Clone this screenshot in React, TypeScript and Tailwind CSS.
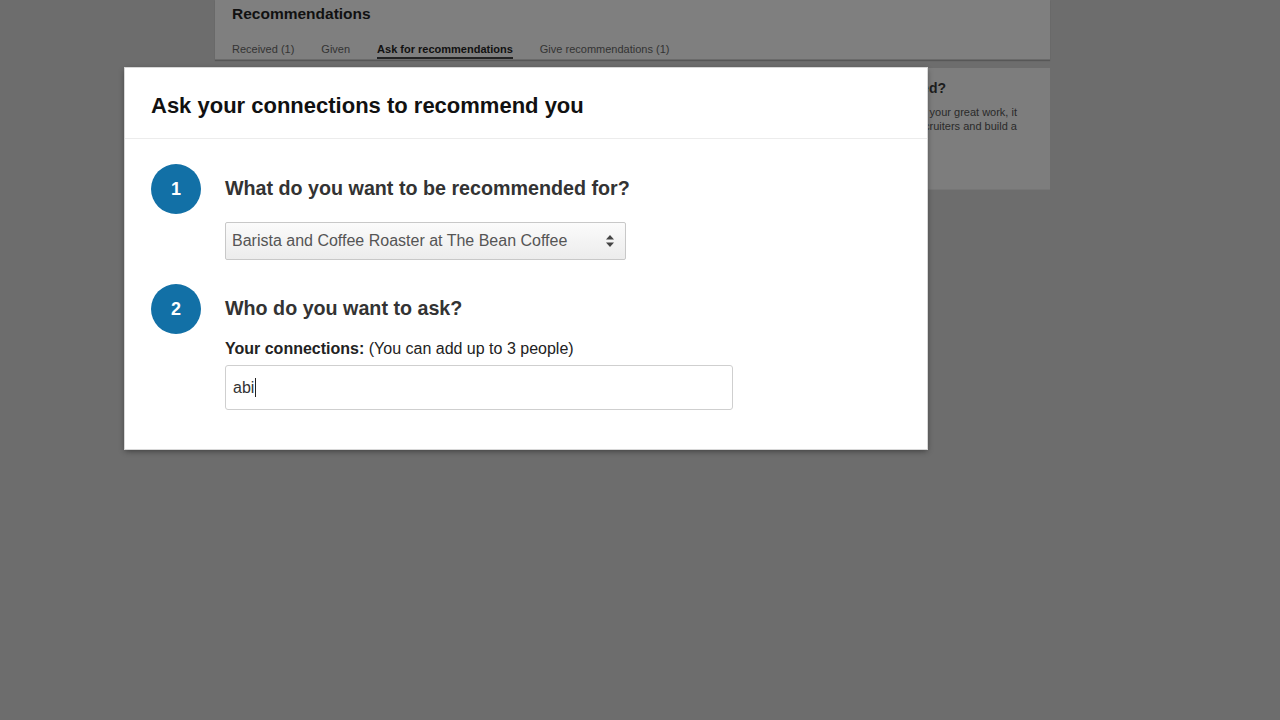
import React from 'react';

const font = { fontFamily: '"Liberation Sans", Arial, Helvetica, sans-serif' };

const tabs = [
  { label: 'Received (1)', active: false },
  { label: 'Given', active: false },
  { label: 'Ask for recommendations', active: true },
  { label: 'Give recommendations (1)', active: false },
];

function StepBadge({ n }: { n: number }) {
  return (
    <div className="flex h-[50px] w-[50px] shrink-0 items-center justify-center rounded-full bg-[#1270a6] text-[18px] font-bold text-white">
      {n}
    </div>
  );
}

function SortArrows() {
  return (
    <svg width="10" height="14" viewBox="0 0 10 14" className="text-[#444]">
      <path d="M5 1 L9 5.5 H1 Z" fill="currentColor" />
      <path d="M5 13 L9 8.5 H1 Z" fill="currentColor" />
    </svg>
  );
}

function AskDialog() {
  return (
    <div className="absolute left-[125px] top-[68px] h-[381px] w-[802px] bg-white shadow-[0_2px_6px_rgba(0,0,0,0.45)] outline outline-1 outline-[#d8d8d8]">
      <div className="flex h-[71px] items-center border-b border-[#ececec] px-[26px] pt-[4px]">
        <h2 className="text-[22px] font-bold text-[#111]">Ask your connections to recommend you</h2>
      </div>

      <div className="flex flex-col px-[26px] pt-[25px]">
        <div className="flex gap-[24px]">
          <StepBadge n={1} />
          <div className="flex flex-col">
            <h3 className="flex h-[50px] items-center text-[19.7px] font-bold text-[#333]">
              What do you want to be recommended for?
            </h3>
            <div className="mt-[8px] flex h-[38px] w-[401px] items-center justify-between rounded-[2px] border border-[#c8c8c8] bg-gradient-to-b from-[#fbfbfb] to-[#ececec] pl-[6px] pr-[10px] text-[16px] text-[#555]">
              <span>Barista and Coffee Roaster at The Bean Coffee</span>
              <SortArrows />
            </div>
          </div>
        </div>

        <div className="mt-[24px] flex gap-[24px]">
          <StepBadge n={2} />
          <div className="flex flex-col">
            <h3 className="flex h-[50px] items-center text-[19.7px] font-bold text-[#333]">
              Who do you want to ask?
            </h3>
            <p className="mt-[3px] text-[16px] text-[#222]">
              <span className="font-bold">Your connections:</span> (You can add up to 3 people)
            </p>
            <div className="mt-[4px] flex h-[45px] w-[508px] items-center rounded-[3px] border border-[#cfcfcf] px-[7px] text-[16px] text-[#333]">
              <span>abi</span>
              <span className="ml-px h-[19px] w-px bg-[#222]" />
            </div>
          </div>
        </div>
      </div>
    </div>
  );
}

export default function App() {
  return (
    <div className="relative h-[720px] w-[1280px] overflow-hidden bg-[#6d6d6d]" style={font}>
      <div className="ml-[215px] flex w-[835px] flex-col gap-[8px]">
        <div className="flex h-[60px] flex-col justify-between border-b border-[#6a6a6a] bg-[#7f7f7f] px-[17px] shadow-[0_1px_1px_rgba(0,0,0,0.2)]">
          <h1 className="pt-[2px] text-[15.5px] font-bold text-[#111]">Recommendations</h1>
          <div className="flex gap-[27px] text-[11px] text-[#333]">
            {tabs.map(t => (
              <span
                key={t.label}
                className={t.active ? 'border-b-2 border-[#222] font-bold text-[#111]' : 'pb-[2px]'}
              >
                {t.label}
              </span>
            ))}
          </div>
        </div>

        <div className="flex h-[122px] justify-end border-b border-[#767676] bg-[#7d7d7d] pr-[33px] pt-[10px]">
          <div className="flex flex-col items-end text-right text-[#1c1c1c]">
            <h2 className="mr-[71px] text-[14px] font-bold">Why get recommended?</h2>
            <p className="mt-[6px] whitespace-nowrap text-[11px] leading-[14px] text-[#2a2a2a]">
              When people speak to your great work, it
              <br />
              helps you stand out to recruiters and build a
            </p>
          </div>
        </div>
      </div>

      <AskDialog />
    </div>
  );
}
